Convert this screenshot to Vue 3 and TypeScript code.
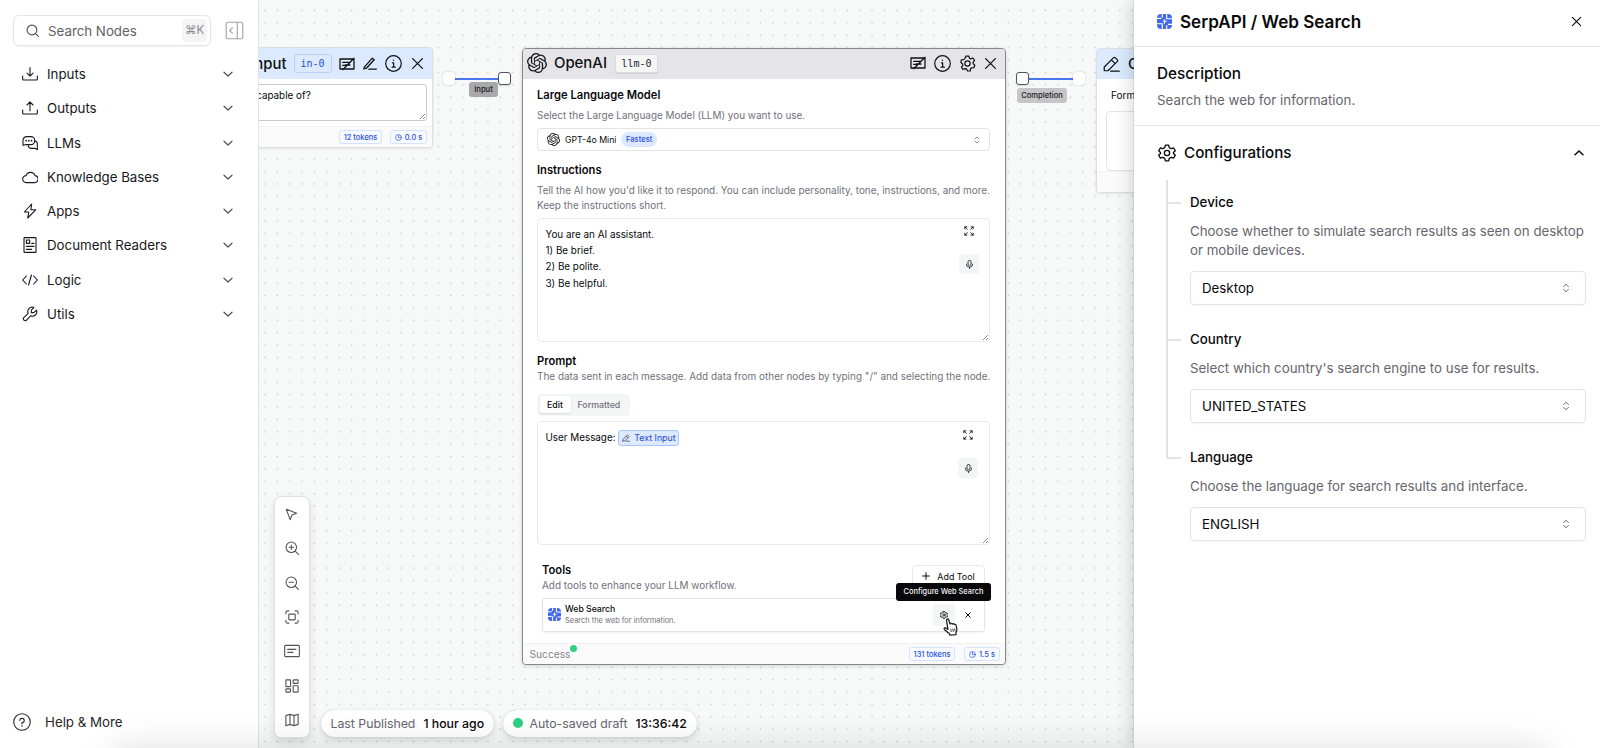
<script setup lang="ts">
import { h, type FunctionalComponent } from 'vue'

const OPENAI =
  'M22.2819 9.8211a5.9847 5.9847 0 0 0-.5157-4.9108 6.0462 6.0462 0 0 0-6.5098-2.9A6.0651 6.0651 0 0 0 4.9807 4.1818a5.9847 5.9847 0 0 0-3.9977 2.9 6.0462 6.0462 0 0 0 .7427 7.0966 5.98 5.98 0 0 0 .511 4.9107 6.051 6.051 0 0 0 6.5146 2.9001A5.9847 5.9847 0 0 0 13.2599 24a6.0557 6.0557 0 0 0 5.7718-4.2058 5.9894 5.9894 0 0 0 3.9977-2.9001 6.0557 6.0557 0 0 0-.7475-7.0729zm-9.022 12.6081a4.4755 4.4755 0 0 1-2.8764-1.0408l.1419-.0804 4.7783-2.7582a.7948.7948 0 0 0 .3927-.6813v-6.7369l2.02 1.1686a.071.071 0 0 1 .038.052v5.5826a4.504 4.504 0 0 1-4.4945 4.4944zm-9.6607-4.1254a4.4708 4.4708 0 0 1-.5346-3.0137l.142.0852 4.783 2.7582a.7712.7712 0 0 0 .7806 0l5.8428-3.3685v2.3324a.0804.0804 0 0 1-.0332.0615L9.74 19.9502a4.4992 4.4992 0 0 1-6.1408-1.6464zM2.3408 7.8956a4.485 4.485 0 0 1 2.3655-1.9728V11.6a.7664.7664 0 0 0 .3879.6765l5.8144 3.3543-2.0201 1.1685a.0757.0757 0 0 1-.071 0l-4.8303-2.7865A4.504 4.504 0 0 1 2.3408 7.872zm16.5963 3.8558L13.1038 8.364 15.1192 7.2a.0757.0757 0 0 1 .071 0l4.8303 2.7913a4.4944 4.4944 0 0 1-.6765 8.1042v-5.6772a.79.79 0 0 0-.407-.667zm2.0107-3.0231l-.142-.0852-4.7735-2.7818a.7759.7759 0 0 0-.7854 0L9.409 9.2297V6.8974a.0662.0662 0 0 1 .0284-.0615l4.8303-2.7866a4.4992 4.4992 0 0 1 6.6802 4.66zM8.3065 12.863l-2.02-1.1638a.0804.0804 0 0 1-.038-.0567V6.0742a4.4992 4.4992 0 0 1 7.3757-3.4537l-.142.0805L8.704 5.459a.7948.7948 0 0 0-.3927.6813zm1.0976-2.3654l2.602-1.4998 2.6069 1.4998v2.9994l-2.5974 1.4997-2.6067-1.4997Z'

const p = (d: string) => `<path d="${d}"/>`

const icons: Record<string, string> = {
  search: '<circle cx="11" cy="11" r="9"/>' + p('M17.5 17.5L23 23'),
  collapse:
    '<rect x="1.5" y="1.5" width="21" height="21" rx="2"/>' + p('M15.5 1.5v21M9.5 8.5L6 12l3.5 3.5'),
  inputs: p('M1 15v4.5a1.5 1.5 0 0 0 1.5 1.5h19a1.5 1.5 0 0 0 1.5-1.5V15M12 2.5v12.5M7.5 10.8L12 15.2l4.500-4.400'),
  outputs: p('M1 15v4.5a1.5 1.5 0 0 0 1.5 1.5h19a1.5 1.5 0 0 0 1.5-1.5V15M12 16V3.500M7.500 7.500L12 3l4.500 4.500'),
  llms:
    p('M1.500 15.500V8a5.500 5.500 0 0 1 5.500-5.500h6.500a5.500 5.500 0 0 1 5.500 5.500v1a5.500 5.500 0 0 1-5.500 5.500H5zM19 8.500a5 5 0 0 1 4 5v8.500l-3.500-2H14a5 5 0 0 1-4.800-4') +
    '<g fill="currentColor" stroke="none"><circle cx="6.300" cy="8.500" r="1.300"/><circle cx="10.300" cy="8.500" r="1.300"/><circle cx="14.300" cy="8.500" r="1.300"/></g>',
  cloud: p('M6.500 20.500a5.300 5.300 0 0 1-.3-10.600 7 7 0 0 1 13.300 0 5.300 5.300 0 0 1-1.500 10.600z'),
  bolt: p('M14.500 1.500L3.500 13.500h6.700L8.500 22.500 20.500 10.200h-7.200z'),
  doc:
    '<rect x="3" y="1" width="18" height="22" rx="1"/><rect x="6.500" y="4.500" width="5" height="5"/>' +
    p('M14.500 9.500h3.500M6.500 14h11.500M6.500 18.500h8'),
  logic: p('M6.500 6L1 12l5.500 6M17.500 6L23 12l-5.500 6M14.200 4.500L9.800 19.500'),
  wrench: p(
    'M21.700 6.200a6.600 6.600 0 0 1-8.900 8.500L6.600 21.400a2.850 2.850 0 0 1-4-4l6.700-6.200a6.600 6.600 0 0 1 8.500-8.900L14 6.300v3.700h3.700z',
  ),
  down: p('M4 8.500l8 7.500 8-7.500'),
  up: p('M4 15.500l8-7.500 8 7.500'),
  help:
    '<circle cx="12" cy="12" r="11"/>' +
    p('M9 9.800a3 2.800 0 1 1 3 3v1.700') +
    '<circle cx="12" cy="17.300" r="1" fill="currentColor" stroke="none"/>',
  note: p('M1.500 4.500h21v15h-21zM5.500 9.500h10M5.500 14h5M22.500 3.500L5.500 20.500M9.500 13.500h7'),
  pencil: p('M3 21v-5L15.500 3.500a1.400 1.400 0 0 1 2 0l3 3a1.400 1.400 0 0 1 0 2L8 21H3zM11.500 21.500H23M12.500 6.500l5 5'),
  pen: p('M4 17.500L16.500 3.500l3 2.500L7 19.500l-4 1zM11 21h12'),
  info:
    '<circle cx="12" cy="12" r="11"/>' +
    p('M10.500 11H12.200v6M10 17.200h4.500') +
    '<circle cx="12" cy="7.500" r="1" fill="currentColor" stroke="none"/>',
  close: p('M3 3l18 18M21 3L3 21'),
  gear:
    '<circle cx="12" cy="12" r="3.700"/>' +
    p('M10 1.500h4l.7 3.100 1.900.9 3-1.300 2.300 3.300-2 2.500v2.200l2.400 2.200-1.300 3.500-3.200.2-1.500 1.400-.3 3.100h-4l-1.300-2.900-2-.4-3 1.100-2.300-3.300 2-2.400-.3-2-2.500-2L3.300 6.800l3.200-.2 1.700-1.500z'),
  cog:
    '<circle cx="12" cy="12" r="3.500"/>' +
    p('M9.800 1.500h4.400l.8 3.300 2.600 1.500 3.300-1 2.200 3.800-2.500 2.300v1.200l2.500 2.300-2.200 3.800-3.300-1-2.600 1.500-.8 3.300H9.800L9 19.200l-2.600-1.500-3.300 1L.9 14.900l2.500-2.300v-1.200L.9 9.100l2.200-3.800 3.300 1L9 4.800z'),
  updown: p('M6 8.500L12 3l6 5.500M6 15.500L12 21l6-5.500'),
  expand:
    p('M2.500 2.500l5.500 5.500M21.500 2.500L16 8M2.500 21.500L8 16M21.500 21.500L16 16M2 7V2h5M17 2h5v5M22 17v5h-5M7 22H2v-5'),
  mic:
    '<rect x="8" y="1" width="8" height="14" rx="4"/>' + p('M3.500 11a8.500 8.500 0 0 0 17 0M12 19.500V23.500'),
  clock: '<circle cx="12" cy="12" r="10"/>' + p('M12 5.500V12.500h6'),
  plus: p('M12 2v20M2 12h20'),
  cursor: p('M2.500 2.500L21.500 9.500l-8.500 3.500L9.500 21.500z'),
  zoomin: '<circle cx="10.800" cy="10.800" r="9"/>' + p('M17.500 17.500L23 23M10.800 7v7.600M7 10.800h7.600'),
  zoomout: '<circle cx="10.800" cy="10.800" r="9"/>' + p('M17.500 17.500L23 23M7 10.800h7.600'),
  fit:
    '<rect x="6.500" y="7" width="11" height="10" rx="1"/>' +
    p('M1.500 6.500v-2a3 3 0 0 1 3-3h2M17.500 1.500h2a3 3 0 0 1 3 3v2M22.500 17.500v2a3 3 0 0 1-3 3h-2M6.500 22.500h-2a3 3 0 0 1-3-3v-2'),
  card: '<rect x="1" y="3.500" width="22" height="17" rx="1.500"/>' + p('M5.500 9.500h12.500M5.500 14h8'),
  grid:
    '<rect x="1.500" y="1.500" width="8" height="11.500" rx="1"/><rect x="14" y="1.500" width="8.500" height="6" rx="1"/><rect x="14" y="11.500" width="8.500" height="11" rx="1"/><rect x="1.500" y="17" width="8" height="5.500" rx="1"/>',
  map: p('M1.500 4.500L8.500 2l7 2.500 7-2.500v17.500l-7 2.500-7-2.500-7 2.500zM8.500 2v17.500M15.500 4.500V22'),
}

interface IconProps {
  name: string
  size: number
  w?: number
}

/** Stroke icon on a 24-unit grid; `w` is the stroke width in screen pixels. */
const Icon: FunctionalComponent<IconProps> = (props) =>
  h('svg', {
    class: 'icon',
    viewBox: '0 0 24 24',
    width: props.size,
    height: props.size,
    fill: 'none',
    stroke: 'currentColor',
    'stroke-width': ((props.w ?? 1.1) * 24) / props.size,
    'stroke-linecap': 'round',
    'stroke-linejoin': 'round',
    innerHTML: icons[props.name],
  })
Icon.props = ['name', 'size', 'w']

const OpenAi: FunctionalComponent<{ size: number }> = (props) =>
  h('svg', { class: 'icon', viewBox: '0 0 24 24', width: props.size, height: props.size }, [
    h('path', { d: OPENAI, fill: '#18181b' }),
  ])
OpenAi.props = ['size']

const Serp: FunctionalComponent<{ size: number }> = (props) =>
  h('svg', { class: 'icon', viewBox: '0 0 24 24', width: props.size, height: props.size }, [
    h('rect', { x: 0, y: 0, width: 24, height: 24, rx: 6.5, fill: '#4468ec' }),
    h('path', {
      d: 'M8.500 0v5.500M0 7h7M15.500 0v7.500H24M0 15.500h8.500V24M15.500 24v-6M17.500 16.500H24M9.500 11.500h6M12 8.500v7',
      stroke: '#fff',
      'stroke-width': 1.8,
      fill: 'none',
    }),
  ])
Serp.props = ['size']

const menu = [
  { icon: 'inputs', label: 'Inputs' },
  { icon: 'outputs', label: 'Outputs' },
  { icon: 'llms', label: 'LLMs' },
  { icon: 'cloud', label: 'Knowledge Bases' },
  { icon: 'bolt', label: 'Apps' },
  { icon: 'doc', label: 'Document Readers' },
  { icon: 'logic', label: 'Logic' },
  { icon: 'wrench', label: 'Utils' },
]

const tools = [
  { icon: 'cursor', size: 13 },
  { icon: 'zoomin', size: 14 },
  { icon: 'zoomout', size: 14 },
  { icon: 'fit', size: 14 },
  { icon: 'card', size: 16 },
  { icon: 'grid', size: 14 },
  { icon: 'map', size: 14 },
]

const fields = [
  {
    label: 'Device',
    hint: 'Choose whether to simulate search results as seen on desktop or mobile devices.',
    value: 'Desktop',
  },
  { label: 'Country', hint: "Select which country's search engine to use for results.", value: 'UNITED_STATES' },
  { label: 'Language', hint: 'Choose the language for search results and interface.', value: 'ENGLISH' },
]
</script>

<template>
  <div class="app">
    <aside class="sidebar">
      <div class="top">
        <div class="searchbox">
          <Icon name="search" :size="13" :w="1.100" />
          <span class="ph">Search Nodes</span>
          <kbd>⌘K</kbd>
        </div>
        <Icon class="collapse" name="collapse" :size="19" :w="1.100" />
      </div>
      <nav>
        <div v-for="m in menu" :key="m.label" class="item">
          <Icon :name="m.icon" :size="16" :w="1.100" />
          <span>{{ m.label }}</span>
          <Icon class="chev" name="down" :size="12" :w="1.200" />
        </div>
      </nav>
      <div class="help">
        <Icon name="help" :size="18" :w="1.100" />
        <span>Help &amp; More</span>
      </div>
    </aside>

    <main class="canvas">
      <section class="node input-node">
        <header class="blue">
          <span class="title">Text Input</span>
          <span class="tag tag-blue">in-0</span>
          <Icon name="note" :size="16" :w="1.300" />
          <Icon name="pen" :size="15" :w="1.300" />
          <Icon name="info" :size="17" :w="1.200" />
          <Icon name="close" :size="13" :w="1.300" />
        </header>
        <div class="input-body">
          <div class="area">What are you capable of?<i class="grip" /></div>
        </div>
        <footer>
          <span class="badge">12 tokens</span>
          <span class="badge"><Icon name="clock" :size="7" :w="0.700" />0.0 s</span>
        </footer>
      </section>

      <i class="wire wire-a" />
      <i class="port port-a soft" />
      <i class="port port-b" />
      <span class="port-label label-a">Input</span>

      <i class="wire wire-b" />
      <i class="port port-c" />
      <i class="port port-d soft" />
      <span class="port-label label-b">Completion</span>

      <section class="node llm-node">
        <header class="grey">
          <OpenAi :size="20" />
          <span class="title">OpenAI</span>
          <span class="tag">llm-0</span>
          <span class="grow" />
          <Icon name="note" :size="16" :w="1.300" />
          <Icon name="info" :size="17" :w="1.200" />
          <Icon name="gear" :size="17" :w="1.200" />
          <Icon name="close" :size="13" :w="1.300" />
        </header>
        <div class="body">
          <h4>Large Language Model</h4>
          <p class="d1">Select the Large Language Model (LLM) you want to use.</p>
          <div class="model">
            <OpenAi :size="13" />
            <span class="model-name">GPT-4o Mini</span>
            <span class="fast">Fastest</span>
            <span class="grow" />
            <Icon name="updown" :size="8" :w="0.800" />
          </div>
          <h4 class="h-inst">Instructions</h4>
          <p class="d2">
            Tell the AI how you'd like it to respond. You can include personality, tone, instructions, and more.<br />Keep
            the instructions short.
          </p>
          <div class="box box-a">
            <div class="lines">
              You are an AI assistant.<br />1) Be brief.<br />2) Be polite.<br />3) Be helpful.
            </div>
            <div class="side">
              <Icon name="expand" :size="10" :w="0.850" />
              <span class="mic"><Icon name="mic" :size="9" :w="1" /></span>
            </div>
            <i class="grip" />
          </div>
          <h4 class="h-prompt">Prompt</h4>
          <p class="d3">The data sent in each message. Add data from other nodes by typing "/" and selecting the node.</p>
          <div class="tabs"><span class="tab on">Edit</span><span class="tab">Formatted</span></div>
          <div class="box box-b">
            <div class="lines">
              User Message:
              <span class="chip"><Icon name="pencil" :size="8" :w="0.800" />Text Input</span>
            </div>
            <div class="side">
              <Icon name="expand" :size="10" :w="0.850" />
              <span class="mic"><Icon name="mic" :size="9" :w="1" /></span>
            </div>
            <i class="grip" />
          </div>
          <div class="tools-head">
            <div>
              <h4>Tools</h4>
              <p>Add tools to enhance your LLM workflow.</p>
            </div>
            <div class="add"><Icon name="plus" :size="8" :w="1" />Add Tool</div>
          </div>
          <div class="tool">
            <Serp :size="13" />
            <div class="tool-text">
              <b>Web Search</b>
              <span>Search the web for information.</span>
            </div>
            <span class="grow" />
            <span class="cfg"><Icon name="cog" :size="8" :w="0.800" /></span>
            <Icon name="close" :size="6" :w="1" />
            <span class="tooltip">Configure Web Search</span>
            <svg class="hand" viewBox="0 0 15 17" width="16" height="18">
              <path
                d="M3.300 2.200C3 .9 4.800.4 5.300 1.700l1.300 4c.4-.8 1.700-.7 2 .1.500-.7 1.700-.5 1.900.4.7-.5 1.800 0 1.900.9l.6 3.200c.3 1.600-.2 2.600-.9 3.500l.1 1.900-5.800.4-.5-1.500C4.300 14 2.900 12.300 1.300 10.800.3 9.700 1.800 8.600 3 9.700l1.600 1.100z"
                fill="#fff"
                stroke="#222"
                stroke-width="1.200"
                stroke-linejoin="round"
              />
              <path d="M7.300 10.200l.4 3M9.200 10l.4 3M11 9.800l.3 3" stroke="#222" stroke-width=".8" fill="none" />
            </svg>
          </div>
        </div>
        <footer>
          <span class="success">Success<i /></span>
          <span class="grow" />
          <span class="badge">131 tokens</span>
          <span class="badge"><Icon name="clock" :size="7" :w="0.700" />1.5 s</span>
        </footer>
      </section>

      <section class="node output-node">
        <header class="blue">
          <Icon name="pencil" :size="18" :w="1.200" />
          <span class="title">Output</span>
        </header>
        <div class="out-body">
          <span>Formatted</span>
          <div class="out-box" />
        </div>
        <footer />
      </section>

      <div class="toolbar">
        <span v-for="t in tools" :key="t.icon" class="tb">
          <Icon :name="t.icon" :size="t.size" :w="1.100" />
        </span>
      </div>
      <div class="status">
        <div class="pill pub">Last Published <b>1 hour ago</b></div>
        <div class="pill saved"><i />Auto-saved draft <b>13:36:42</b></div>
      </div>
    </main>

    <aside class="panel">
      <div class="p-head">
        <Serp :size="15" />
        <h2>SerpAPI / Web Search</h2>
        <Icon name="close" :size="11" :w="1.100" />
      </div>
      <div class="p-desc">
        <h3>Description</h3>
        <p>Search the web for information.</p>
      </div>
      <div class="p-conf">
        <Icon name="cog" :size="18" :w="1.300" />
        <h3>Configurations</h3>
        <Icon name="up" :size="12" :w="1.500" />
      </div>
      <div class="fields">
        <div v-for="f in fields" :key="f.label" class="field">
          <h5>{{ f.label }}</h5>
          <p>{{ f.hint }}</p>
          <div class="select">
            <span>{{ f.value }}</span>
            <Icon name="updown" :size="10" :w="1" />
          </div>
        </div>
      </div>
    </aside>
    <div class="haze" />
  </div>
</template>

<style>
body {
  margin: 0;
  overflow: hidden;
}
</style>

<style scoped>
* {
  box-sizing: border-box;
}
h2,
h3,
h4,
h5,
p {
  margin: 0;
}
.app {
  position: relative;
  display: flex;
  width: 100%;
  height: 748px;
  overflow: hidden;
  background: #fff;
  color: #09090b;
  font-family: Inter, 'Liberation Sans', sans-serif;
  font-size: 13.300px;
}
.icon {
  display: block;
  flex: none;
}
.grow {
  flex: 1;
}

/* Sidebar */
.sidebar {
  width: 259px;
  flex: none;
  display: flex;
  flex-direction: column;
  border-right: 1px solid #e4e4e7;
  background: #fff;
}
.top {
  display: flex;
  align-items: center;
  padding: 15px 14px 0 13px;
}
.searchbox {
  display: flex;
  align-items: center;
  width: 198px;
  height: 31px;
  padding: 0 3px 0 12px;
  border: 1px solid #e4e4e7;
  border-radius: 6px;
  box-shadow: 0 1px 2px rgba(0, 0, 0, 0.06);
  color: #52525b;
}
.ph {
  flex: 1;
  margin-left: 9px;
  color: #5f5f66;
}
kbd {
  width: 25px;
  height: 23px;
  border-radius: 4px;
  background: #f4f4f5;
  color: #8b8b92;
  font: 11.500px/23px Inter, 'DejaVu Sans', sans-serif;
  text-align: center;
}
.collapse {
  margin-left: auto;
  color: #a1a1aa;
}
nav {
  margin-top: 11px;
}
.item {
  display: flex;
  align-items: center;
  height: 34.280px;
  padding: 0 24px 0 22px;
  color: #18181b;
}
.item span {
  flex: 1;
  margin-left: 9px;
}
.chev {
  color: #52525b;
}
.help {
  display: flex;
  align-items: center;
  gap: 14px;
  margin: auto 0 17.500px 13px;
  color: #27272a;
}

/* Canvas */
.canvas {
  position: relative;
  flex: 1;
  overflow: hidden;
  background-color: #f7f8f8;
  background-image: radial-gradient(circle, #cdcdd2 0.700px, transparent 1.100px);
  background-size: 12.400px 12.400px;
  background-position: -0.300px 4.300px;
}
.node {
  position: absolute;
  display: flex;
  flex-direction: column;
  background: #fff;
  border: 1px solid #dedee2;
  border-radius: 4px;
  box-shadow: 0 1px 3px rgba(0, 0, 0, 0.08);
}
.node header {
  display: flex;
  align-items: center;
  height: 31px;
  flex: none;
  border-radius: 3px 3px 0 0;
  color: #111;
}
.blue {
  background: #dbeafe;
}
.grey {
  background: #e4e4e9;
}
.title {
  font-size: 14.900px;
  font-weight: 500;
  white-space: nowrap;
}
.tag {
  height: 19px;
  border: 1px solid #dcdcdf;
  border-radius: 3px;
  background: #f5f6f6;
  color: #27272a;
  box-shadow: 0 1px 1px rgba(0, 0, 0, 0.08);
  font: 500 10px/17px 'DejaVu Sans Mono', monospace;
  text-align: center;
}
.tag-blue {
  border-color: #bcd0fa;
  background: #dbeafe;
  color: #2c4bd8;
  box-shadow: none;
}
.badge {
  display: inline-flex;
  align-items: center;
  justify-content: center;
  height: 14px;
  border: 1px solid #d3e2fd;
  border-radius: 3px;
  background: #f7faff;
  color: #2a50df;
  font-size: 7.500px;
  font-weight: 500;
  white-space: nowrap;
}
.badge .icon {
  margin-right: 3px;
}
.node footer {
  display: flex;
  align-items: center;
  background: #fafafa;
  border-top: 1px solid #f1f1f3;
  border-radius: 0 0 4px 4px;
}

.input-node {
  left: -110px;
  top: 47px;
  width: 284px;
  height: 101px;
}
.input-node header {
  justify-content: flex-end;
  padding-right: 8.500px;
}
.input-node .tag {
  width: 38px;
  margin: 0 7px 0 7px;
}
.input-node header .icon + .icon {
  margin-left: 7px;
}
.input-node header .icon + .icon + .icon {
  margin-left: 8.500px;
}
.input-node header .icon:last-child {
  margin-left: 11px;
}
.input-body {
  flex: 1;
  padding: 5px 5px 0;
}
.area {
  position: relative;
  height: 37px;
  padding: 4px 0 0 35.500px;
  border: 1px solid #c9c9ce;
  border-radius: 3px;
  font-size: 9.900px;
  line-height: 13px;
}
.input-node footer {
  height: 21px;
  justify-content: flex-end;
  padding-right: 5px;
  gap: 8px;
}
.input-node .badge:first-child {
  width: 43px;
}
.input-node .badge:last-child {
  width: 37px;
}
.grip {
  position: absolute;
  right: 1px;
  bottom: 1px;
  width: 5px;
  height: 5px;
  background: linear-gradient(135deg, transparent 46%, #8a8a90 46%, #8a8a90 58%, transparent 58%, transparent 76%, #8a8a90 76%, #8a8a90 90%, transparent 90%);
}

/* Ports and wires */
.wire {
  position: absolute;
  top: 77.500px;
  height: 2px;
  background: #4c74f0;
}
.wire-a {
  left: 194px;
  width: 48px;
}
.wire-b {
  left: 768px;
  width: 48px;
}
.port {
  position: absolute;
  top: 72px;
  width: 13px;
  height: 13px;
  border: 1px solid #52525b;
  border-radius: 3px;
  background: #fff;
  box-shadow: 0 1px 2px rgba(0, 0, 0, 0.12);
}
.soft {
  width: 12px;
  border-color: #fff;
  box-shadow: 0 0 2px rgba(0, 0, 0, 0.22);
}
.port-a {
  left: 184px;
}
.port-b {
  left: 239px;
}
.port-c {
  left: 757px;
}
.port-d {
  left: 814px;
}
.port-label {
  position: absolute;
  height: 15px;
  border-radius: 3px;
  background: #c6c6c8;
  color: #18181b;
  font-size: 7.600px;
  font-weight: 500;
  line-height: 15px;
  text-align: center;
}
.label-a {
  left: 210px;
  top: 82px;
  width: 29px;
  background: #a9a9ab;
}
.label-b {
  left: 758px;
  top: 87.500px;
  width: 50px;
}

/* OpenAI node */
.llm-node {
  left: 263px;
  top: 48px;
  width: 484px;
  height: 617px;
  border-color: #85858a;
  box-shadow: 0 1px 4px rgba(0, 0, 0, 0.14);
}
.llm-node header {
  height: 30px;
  padding: 0 8px 2px 4px;
}
.llm-node .title {
  margin-left: 7px;
}
.llm-node .tag {
  width: 43px;
  margin-left: 8px;
}
.llm-node header .icon:nth-of-type(n + 2) {
  margin-left: 8px;
}
.body {
  flex: 1;
  padding: 9px 15px 0 14px;
}
h4 {
  font-size: 11.200px;
  font-weight: 600;
  line-height: 14px;
}
.body p {
  color: #71717a;
  font-size: 9.950px;
  line-height: 15px;
  white-space: nowrap;
}
.d1 {
  margin-top: 6px;
}
.model {
  display: flex;
  align-items: center;
  height: 23px;
  margin-top: 5px;
  padding: 0 8px 0 9px;
  border: 1px solid #e4e4e7;
  border-radius: 4px;
  font-size: 8.700px;
}
.model > .icon:last-child {
  color: #71717a;
}
.model-name {
  margin-left: 5px;
}
.fast {
  height: 15px;
  margin-left: 5px;
  padding: 0 4.500px;
  border-radius: 8px;
  background: #dbe8fe;
  color: #2a50df;
  font-size: 7.600px;
  font-weight: 500;
  line-height: 15px;
}
.h-inst {
  margin-top: 12px;
}
.body .d2 {
  margin-top: 6px;
}
.box {
  position: relative;
  display: flex;
  justify-content: space-between;
  height: 124px;
  border: 1px solid #e9e9eb;
  border-radius: 4px;
}
.box-a {
  margin-top: 5px;
}
.box-b {
  margin-top: 5.500px;
}
.lines {
  padding: 7px 0 0 7.500px;
  font-size: 9.870px;
  line-height: 16.200px;
}
.side {
  display: flex;
  flex-direction: column;
  align-items: center;
  gap: 18px;
  padding: 7px 10px 0 0;
}
.box-b .side {
  padding-right: 11px;
  padding-top: 8px;
}
.mic {
  display: flex;
  align-items: center;
  justify-content: center;
  width: 20px;
  height: 20px;
  border-radius: 3px;
  background: #f4f5f5;
  color: #3f3f46;
}
.h-prompt {
  margin-top: 12px;
}
.body .d3 {
  margin-top: 1px;
}
.tabs {
  display: flex;
  align-items: center;
  width: 93px;
  height: 22px;
  margin-top: 9.500px;
  padding: 0 2.500px;
  border-radius: 4px;
  background: #f4f5f5;
  font-size: 8.800px;
  font-weight: 500;
  color: #71717a;
}
.tab {
  padding-left: 7px;
  line-height: 17px;
}
.on {
  width: 31px;
  padding: 0;
  border-radius: 3px;
  background: #fff;
  color: #09090b;
  box-shadow: 0 1px 2px rgba(0, 0, 0, 0.12);
  text-align: center;
}
.chip {
  display: inline-flex;
  align-items: center;
  height: 16px;
  padding: 0 2px 0 3px;
  border: 1px solid #a9c5f8;
  border-radius: 3px;
  background: #dbeafe;
  color: #2a45cf;
  font-size: 8.800px;
  vertical-align: middle;
}
.chip .icon {
  margin-right: 4px;
  color: #52525b;
}
.tools-head {
  display: flex;
  justify-content: space-between;
  margin: 17.500px 5px 0;
}
.tools-head p {
  margin-top: 1px;
}
.add {
  display: flex;
  align-items: center;
  justify-content: center;
  gap: 7px;
  width: 73px;
  height: 23px;
  margin-top: 2px;
  border: 1px solid #e9e9eb;
  border-radius: 4px;
  font-size: 8.900px;
}
.tool {
  position: relative;
  display: flex;
  align-items: center;
  height: 34px;
  margin: 5px 5px 0;
  padding: 0 13px 0 4.500px;
  border: 1px solid #e4e4e7;
  border-radius: 3px;
  box-shadow: 0 1px 2px rgba(0, 0, 0, 0.06);
}
.tool-text {
  display: flex;
  flex-direction: column;
  margin-left: 4.500px;
}
.tool-text b {
  font-size: 8.700px;
  font-weight: 500;
  line-height: 12px;
}
.tool-text span {
  color: #71717a;
  font-size: 7.430px;
  line-height: 11px;
}
.cfg {
  display: flex;
  align-items: center;
  justify-content: center;
  width: 22px;
  height: 22px;
  margin-right: 10px;
  border-radius: 3px;
  background: #f4f5f5;
}
.tooltip {
  position: absolute;
  right: -7px;
  top: -16px;
  width: 95px;
  height: 18px;
  border-radius: 3px;
  background: #09090b;
  color: #f4f4f5;
  font-size: 7.400px;
  font-weight: 500;
  line-height: 18px;
  text-align: center;
}
.hand {
  position: absolute;
  right: 25px;
  top: 19px;
}
.llm-node footer {
  height: 21px;
  flex: none;
  padding: 0 5px 0 6.500px;
}
.llm-node .badge {
  width: 46px;
}
.llm-node .badge:last-child {
  width: 36px;
  margin-left: 9px;
}
.success {
  position: relative;
  color: #85858c;
  font-size: 10.200px;
}
.success i {
  position: absolute;
  left: 100%;
  top: -3px;
  width: 7px;
  height: 7px;
  border-radius: 50%;
  background: #2fcf85;
}

/* Output node */
.output-node {
  left: 837px;
  top: 48px;
  width: 240px;
  height: 145px;
}
.output-node header {
  height: 30px;
  padding-left: 5px;
}
.output-node .title {
  margin-left: 8px;
}
.out-body {
  flex: 1;
  padding: 9px 9px 0;
  font-size: 10px;
  line-height: 14px;
}
.out-body span {
  margin-left: 5px;
}
.out-box {
  height: 60px;
  margin-top: 9px;
  border: 1px solid #e4e4e7;
  border-radius: 4px;
}
.output-node footer {
  height: 22px;
}

/* Floating controls */
.toolbar {
  position: absolute;
  left: 14.500px;
  top: 496px;
  width: 36px;
  height: 242px;
  border: 1px solid #e1e1e4;
  border-radius: 7px;
  background: #fff;
  color: #52525b;
  box-shadow: 0 4px 8px rgba(0, 0, 0, 0.12);
}
.tb {
  display: flex;
  align-items: center;
  justify-content: center;
  height: 34.300px;
}
.status {
  position: absolute;
  left: 62px;
  top: 710px;
  display: flex;
  gap: 9px;
}
.pill {
  display: flex;
  align-items: center;
  height: 27px;
  padding: 0 9.500px 1px;
  border-radius: 14px;
  background: #fff;
  color: #66666d;
  font-size: 12.300px;
  white-space: nowrap;
  box-shadow: 0 0 1px rgba(0, 0, 0, 0.25), 0 3px 7px rgba(0, 0, 0, 0.12);
}
.pub {
  width: 173px;
}
.saved {
  width: 194px;
}
.pill b {
  margin-left: 8px;
  color: #09090b;
  font-weight: 500;
}
.pill i {
  flex: none;
  width: 10px;
  height: 10px;
  margin-right: 7px;
  border-radius: 50%;
  background: #2fcf85;
}

/* Right panel */
.panel {
  position: relative;
  width: 466px;
  flex: none;
  background: #fff;
  box-shadow: -1px 0 0 rgba(0, 0, 0, 0.06), -4px 0 14px rgba(0, 0, 0, 0.14);
}
.p-head {
  display: flex;
  align-items: center;
  height: 47px;
  padding: 0 18px 3px 23px;
  border-bottom: 1px solid #e4e4e7;
}
h2 {
  flex: 1;
  margin-left: 8px;
  font-size: 17.100px;
  font-weight: 600;
}
.p-desc {
  height: 79px;
  padding: 17px 23px 0;
  border-bottom: 1px solid #e4e4e7;
}
h3 {
  font-size: 15.300px;
  font-weight: 500;
  line-height: 20px;
}
.panel p {
  color: #66666d;
  font-size: 13.300px;
  line-height: 19px;
}
.panel .p-desc p {
  margin-top: 7px;
}
.p-conf {
  display: flex;
  align-items: center;
  height: 53px;
  padding: 0 15px 0 24px;
}
.p-conf h3 {
  flex: 1;
  margin-left: 8px;
  font-size: 15.200px;
}
.fields {
  margin-left: 32px;
  padding: 13px 14px 0 0;
}
.field {
  position: relative;
  padding: 0 0 0 24px;
  margin-bottom: 24.300px;
}
.field::before {
  content: '';
  position: absolute;
  left: 0;
  top: -12px;
  bottom: -25px;
  width: 2px;
  background: #e4e4e7;
}
.field::after {
  content: '';
  position: absolute;
  left: 0;
  top: 10px;
  width: 15px;
  height: 2px;
  background: #e4e4e7;
}
.field:last-child::before {
  bottom: auto;
  height: 23px;
}
h5 {
  font-size: 13.300px;
  font-weight: 500;
  line-height: 20px;
}
.field p {
  margin-top: 10px;
}
.select {
  display: flex;
  align-items: center;
  justify-content: space-between;
  height: 34px;
  margin-top: 10.700px;
  padding: 0 14px 0 11px;
  border: 1px solid #e4e4e7;
  border-radius: 4px;
  box-shadow: 0 1px 2px rgba(0, 0, 0, 0.04);
}
.select .icon {
  color: #71717a;
}
.haze {
  position: absolute;
  left: 120px;
  right: 60px;
  bottom: -43px;
  height: 36px;
  box-shadow: 0 0 36px 6px rgba(0, 0, 0, 0.14);
  pointer-events: none;
}
</style>
